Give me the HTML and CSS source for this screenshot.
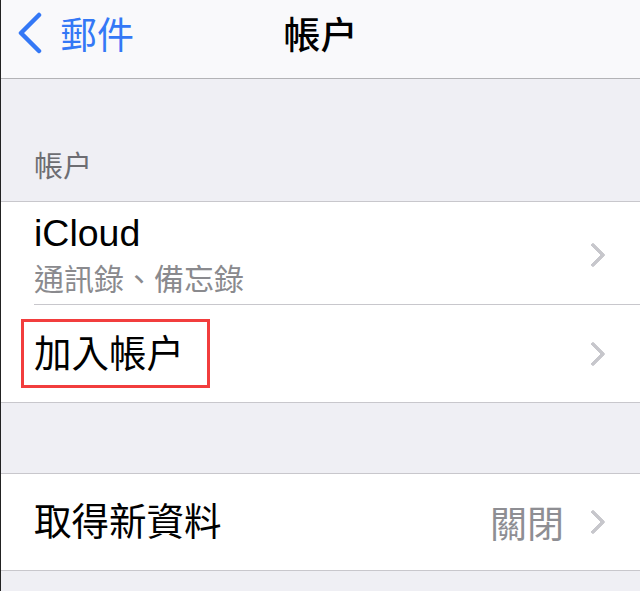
FILE: index.html
```html
<!DOCTYPE html>
<html lang="zh-Hant">
<head>
    <meta charset="UTF-8">
    <meta name="viewport" content="width=device-width, initial-scale=1.0">
    <title>帳户</title>
    <link rel="stylesheet" href="styles.css">
</head>
<body>
    <div class="screen">
        <!-- 導覽列 -->
        <header class="navbar">
            <a class="back" href="#">
                <svg class="back-icon" width="26" height="42" viewBox="0 0 26 42">
                    <path d="M22 3 L4 21 L22 39" fill="none" stroke="#3478f6" stroke-width="4.5" stroke-linecap="round" stroke-linejoin="round"/>
                </svg>
                <span>郵件</span>
            </a>
            <h1 class="title">帳户</h1>
            <div></div>
        </header>

        <div class="section-header">帳户</div>
        <div class="group">
            <a class="cell cell-tall" href="#">
                <div class="cell-text">
                    <div class="cell-label">iCloud</div>
                    <div class="cell-sub">通訊錄、備忘錄</div>
                </div>
                <span class="chevron"></span>
            </a>
            <a class="cell cell-add" href="#">
                <div class="cell-text">
                    <div class="cell-label">加入帳户</div>
                </div>
                <span class="chevron"></span>
                <span class="highlight"></span>
            </a>
        </div>

        <div class="section-gap"></div>
        <div class="group">
            <a class="cell cell-fetch" href="#">
                <div class="cell-text">
                    <div class="cell-label">取得新資料</div>
                </div>
                <span class="cell-value">關閉</span>
                <span class="chevron"></span>
            </a>
        </div>
    </div>
</body>
</html>
```

FILE: styles.css
```css
body {
    margin: 0;
    font-family: "Liberation Sans", "Noto Sans CJK TC", sans-serif;
    background-color: #efeff4;
}
.screen {
    min-height: 591px;
    border-left: 1px solid #222;
    background-color: #efeff4;
}
a {
    text-decoration: none;
    color: inherit;
}
.navbar {
    height: 78px;
    display: grid;
    grid-template-columns: 1fr auto 1fr;
    align-items: center;
    background-color: #f9f9fb;
    border-bottom: 1px solid #b3b3b6;
}
.back {
    display: flex;
    align-items: center;
    gap: 17px;
    padding-left: 16px;
    color: #3478f6;
    font-size: 37px;
    margin-top: -12px;
}
.title {
    margin: -12px 0 0;
    font-size: 37px;
    font-weight: 500;
    color: #000;
}
.section-header {
    height: 122px;
    box-sizing: border-box;
    padding: 0 0 16px 33px;
    display: flex;
    align-items: flex-end;
    font-size: 29px;
    color: #6d6d72;
}
.section-gap {
    height: 70px;
}
.group {
    background-color: #fff;
    border-top: 1px solid #c8c7cc;
    border-bottom: 1px solid #c8c7cc;
}
.cell {
    position: relative;
    display: flex;
    align-items: center;
    padding-left: 33px;
    padding-right: 34px;
}
.cell + .cell {
    border-top: 1px solid #c8c7cc;
    margin-left: 33px;
    padding-left: 0;
}
.cell-tall {
    height: 102px;
    box-sizing: border-box;
    padding-top: 3px;
}
.cell-add {
    height: 97px;
}
.cell-fetch {
    height: 96px;
}
.cell-text {
    flex: 1;
}
.cell-label {
    font-size: 37.5px;
    color: #000;
    line-height: 44px;
}
.cell-sub {
    font-size: 30px;
    color: #8a8a8e;
    line-height: 36px;
    margin-top: 7px;
}
.cell-value {
    font-size: 37px;
    color: #8e8e93;
    margin-right: 20px;
}
.chevron {
    width: 14px;
    height: 14px;
    border-top: 4px solid #c7c7cc;
    border-right: 4px solid #c7c7cc;
    border-radius: 2px;
    transform: rotate(45deg);
    margin-right: 4px;
}
.highlight {
    position: absolute;
    left: -13px;
    top: 14px;
    width: 183px;
    height: 63px;
    border: 3px solid #f23d3d;
}
```
